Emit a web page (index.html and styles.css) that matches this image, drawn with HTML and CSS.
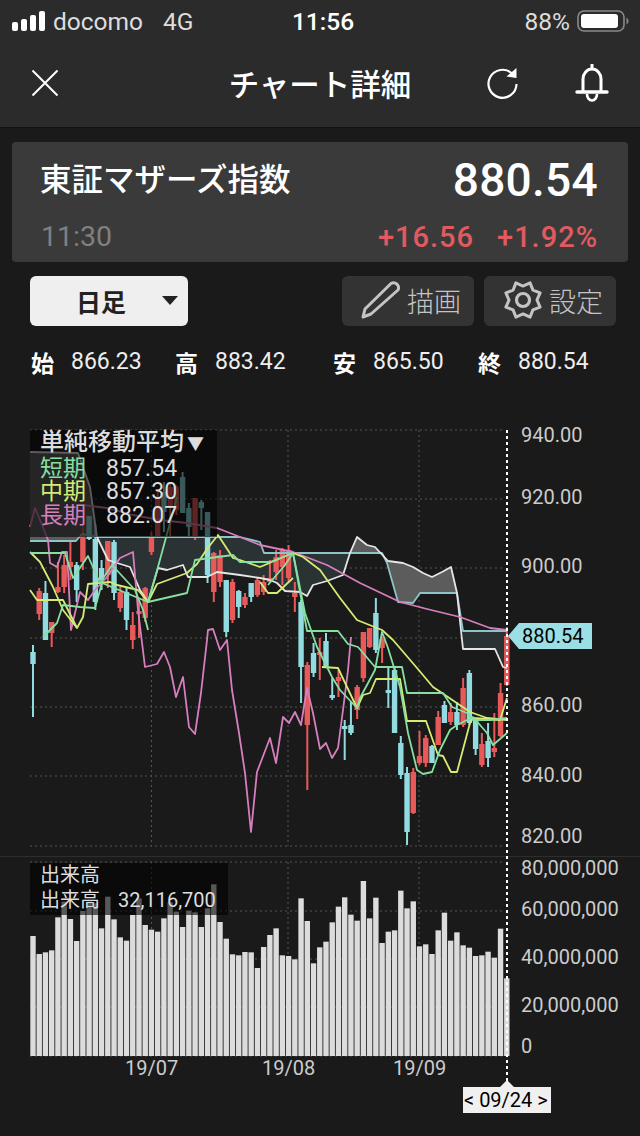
FILE: index.html
```html
<!DOCTYPE html>
<html lang="ja">
<head>
  <meta charset="UTF-8">
  <meta name="viewport" content="width=device-width, initial-scale=1.0">
  <title>チャート詳細</title>
  <link rel="stylesheet" href="styles.css">
</head>
<body>
  <div class="status">
    <div class="status-left">
      <svg class="signal" width="34" height="22" viewBox="0 0 34 22">
        <rect x="0" y="12" width="6" height="9" rx="2"/>
        <rect x="9" y="9" width="6" height="12" rx="2"/>
        <rect x="18" y="5" width="6" height="16" rx="2"/>
        <rect x="27" y="1" width="6" height="20" rx="2"/>
      </svg>
      <span>docomo</span>
      <span class="net">4G</span>
    </div>
    <div class="status-time">11:56</div>
    <div class="status-right">
      <span>88%</span>
      <svg width="52" height="24" viewBox="0 0 52 24">
        <rect x="1" y="2" width="46" height="20" rx="6" fill="none" stroke="#8a8a8a" stroke-width="1.6"/>
        <rect x="4" y="5" width="37" height="14" rx="3" fill="#fff"/>
        <path d="M49.5 8.5 a4 4 0 0 1 0 7z" fill="#8a8a8a"/>
      </svg>
    </div>
  </div>

  <header class="nav">
    <svg class="nav-close" width="28" height="28" viewBox="0 0 28 28">
      <path d="M1.5 1.5 L26.5 26.5 M26.5 1.5 L1.5 26.5" stroke="#fff" stroke-width="2" fill="none"/>
    </svg>
    <h1>チャート詳細</h1>
    <div class="nav-icons">
      <svg width="32" height="32" viewBox="487 67 32 32">
        <path d="M513 73.5 A14 14 0 1 0 517.5 84" stroke="#fff" stroke-width="2.2" fill="none"/>
        <path d="M517.5 68 L517.5 78 L507.5 76.5 Z" fill="#fff"/>
      </svg>
      <svg width="34" height="40" viewBox="576 64 34 40">
        <path d="M593 65 V71 M584 92 V80 A9 10 0 0 1 602 80 V92" stroke="#fff" stroke-width="3" fill="none"/>
        <path d="M578 93 H608" stroke="#fff" stroke-width="3.4" stroke-linecap="round"/>
        <path d="M588 95 a5 6.5 0 0 0 10 0" stroke="#fff" stroke-width="2.6" fill="none"/>
      </svg>
    </div>
  </header>

  <section class="quote">
    <div class="quote-row">
      <div class="quote-name">東証マザーズ指数</div>
      <div class="quote-price">880.54</div>
    </div>
    <div class="quote-row quote-sub">
      <div class="quote-time">11:30</div>
      <div class="quote-change"><span>+16.56</span><span>+1.92%</span></div>
    </div>
  </section>

  <div class="tools">
    <div class="select">
      <span>日足</span>
      <i class="caret"></i>
    </div>
    <div class="tool-btns">
      <div class="tool-btn">
        <svg width="40" height="40" viewBox="359 282 40 40">
          <path d="M361 319 L363 311 L389 285.5 A5 5 0 0 1 396 292 L369 316 Z" stroke="#c4c4c4" stroke-width="3" fill="none" stroke-linejoin="round"/>
        </svg>
        <span>描画</span>
      </div>
      <div class="tool-btn">
        <svg width="40" height="40" viewBox="-20 -20 40 40">
          <polygon transform="rotate(22.5)" points="18.5,0 12.9,5.4 13.1,13.1 5.4,12.9 0,18.5 -5.4,12.9 -13.1,13.1 -12.9,5.4 -18.5,0 -12.9,-5.4 -13.1,-13.1 -5.4,-12.9 0,-18.5 5.4,-12.9 13.1,-13.1 12.9,-5.4" stroke="#c4c4c4" stroke-width="3" fill="none" stroke-linejoin="round"/>
          <circle r="6.5" stroke="#c4c4c4" stroke-width="3.2" fill="none"/>
        </svg>
        <span>設定</span>
      </div>
    </div>
  </div>

  <div class="ohlc">
    <div><b>始</b><span>866.23</span></div>
    <div><b>高</b><span>883.42</span></div>
    <div><b>安</b><span>865.50</span></div>
    <div><b>終</b><span>880.54</span></div>
  </div>

  <section class="chart">
    <svg class="chart-svg" width="640" height="736" viewBox="0 400 640 736">
      <g id="grid"></g>
      <g id="cloud"></g>
      <g id="candles"></g>
      <g id="lines"></g>
      <g id="volume"></g>
      <path class="cursor" d="M507 430 V1082"/>
      <g class="axis">
        <text x="521" y="442">940.00</text>
        <text x="521" y="504">920.00</text>
        <text x="521" y="573">900.00</text>
        <text x="521" y="712">860.00</text>
        <text x="521" y="782">840.00</text>
        <text x="521" y="843">820.00</text>
        <text x="521" y="875">80,000,000</text>
        <text x="521" y="916">60,000,000</text>
        <text x="521" y="964">40,000,000</text>
        <text x="521" y="1012">20,000,000</text>
        <text x="521" y="1053">0</text>
        <text x="125" y="1075">19/07</text>
        <text x="262" y="1075">19/08</text>
        <text x="393" y="1075">19/09</text>
      </g>
      <polygon class="price-tag" points="508,636 519,623 592,623 592,649 519,649"/>
      <text class="tag-text" x="522" y="643">880.54</text>
      <polygon class="date-tag" points="500,1087 507,1080 514,1087 551,1087 551,1113 463,1113 463,1087"/>
      <text class="tag-text" x="464" y="1107">&lt; 09/24 &gt;</text>
    </svg>

    <div class="legend legend-ma">
      <div class="legend-title">単純移動平均<small>▼</small></div>
      <div class="legend-row"><span class="ma-short">短期</span><b>857.54</b></div>
      <div class="legend-row"><span class="ma-mid">中期</span><b>857.30</b></div>
      <div class="legend-row"><span class="ma-long">長期</span><b>882.07</b></div>
    </div>
    <div class="legend legend-vol">
      <div>出来高</div>
      <div class="legend-row"><span>出来高</span><b>32,116,700</b></div>
    </div>
  </section>

  <script src="chart.js"></script>
</body>
</html>
```

FILE: styles.css
```css
* {
  box-sizing: border-box;
}
body {
  margin: 0;
  width: 640px;
  height: 1136px;
  overflow: hidden;
  background: #1a1a1a;
  color: #fff;
  font-family: Roboto, "Noto Sans CJK JP", sans-serif;
}
.status {
  display: grid;
  grid-template-columns: 1fr auto 1fr;
  align-items: center;
  height: 42px;
  padding: 0 12px;
  background: #2b2b2b;
  font-size: 24.5px;
  color: #ddd;
}
.status-left, .status-right {
  display: flex;
  align-items: center;
  gap: 7px;
}
.status-left .net {
  margin-left: 13px;
}
.status-right {
  justify-content: flex-end;
  margin-right: -1px;
}
.status-time {
  color: #fff;
  font-weight: 500;
  margin-left: 6px;
}
.signal rect {
  fill: #fff;
}
.nav {
  display: grid;
  grid-template-columns: 1fr auto 1fr;
  align-items: center;
  height: 86px;
  padding: 0 31px 3px;
  background: #2b2b2b;
  border-bottom: 1px solid #111;
}
.nav h1 {
  margin: 0;
  font-size: 30.5px;
  font-weight: 500;
  font-family: "Noto Sans CJK JP", sans-serif;
}
.nav-icons {
  display: flex;
  justify-content: flex-end;
  align-items: center;
  gap: 57px;
}
.quote {
  margin: 14px 12px 0;
  height: 120px;
  padding: 7px 30px 0 28px;
  background: #3a3a3a;
  border-radius: 4px;
}
.quote-row {
  display: flex;
  justify-content: space-between;
  align-items: center;
}
.quote-name {
  font-family: "Noto Sans CJK JP", sans-serif;
  font-size: 31.5px;
  font-weight: 500;
  line-height: 46px;
  margin-top: -1px;
}
.quote-price {
  font-size: 46px;
  font-weight: 500;
  line-height: 52px;
  letter-spacing: 0.3px;
  margin-top: 5px;
}
.quote-sub {
  margin-top: 13px;
  padding-left: 1px;
  font-size: 28.5px;
  line-height: 36px;
}
.quote-time {
  color: #808080;
}
.quote-change {
  display: flex;
  gap: 23px;
  color: #e25a5f;
  font-size: 29px;
  font-weight: 500;
  letter-spacing: 1px;
}
.tools {
  display: flex;
  justify-content: space-between;
  height: 50px;
  margin-top: 14px;
  padding: 0 24px 0 30px;
}
.select {
  position: relative;
  width: 158px;
  background: #efefef;
  border-radius: 6px;
  color: #222;
  font-family: "Noto Sans CJK JP", sans-serif;
  font-size: 25px;
  font-weight: 700;
  line-height: 50px;
  padding-left: 46px;
}
.caret {
  position: absolute;
  left: 132px;
  top: 20px;
  border-left: 8px solid transparent;
  border-right: 8px solid transparent;
  border-top: 9px solid #222;
}
.tool-btns {
  display: flex;
  gap: 10px;
}
.tool-btn {
  display: flex;
  align-items: center;
  justify-content: flex-end;
  gap: 6px;
  width: 132px;
  padding: 0 13px 2px 0;
  background: #333;
  border-radius: 6px;
  color: #c4c4c4;
  font-family: "Noto Sans CJK JP", sans-serif;
  font-size: 27px;
  font-weight: 300;
}
.ohlc {
  display: grid;
  grid-template-columns: 144px 158px 145px 1fr;
  height: 26px;
  margin-top: 23px;
  padding-left: 31px;
  line-height: 26px;
  font-size: 23px;
}
.ohlc div {
  display: flex;
  gap: 17px;
}
.ohlc b {
  font-family: "Noto Sans CJK JP", sans-serif;
  font-weight: 700;
}
.ohlc span {
  color: #eee;
}
.chart {
  position: relative;
  height: 736px;
  margin-top: 25px;
}
.chart-svg {
  display: block;
}
.grid-line {
  stroke: #555;
  stroke-width: 1;
  stroke-dasharray: 2 3;
  fill: none;
}
.divider {
  stroke: #2d2d2d;
  stroke-width: 1;
}
.cursor {
  stroke: #fff;
  stroke-width: 2;
  stroke-dasharray: 3 3;
  fill: none;
}
.axis text {
  fill: #ccc;
  font-size: 20px;
}
.price-tag {
  fill: #9adfe4;
}
.date-tag {
  fill: #f0f0f0;
}
.tag-text {
  fill: #000;
  font-size: 20px;
}
.cloud-dark {
  fill: #2a3234;
}
.cloud-light {
  fill: #5c5c5c;
}
.ln {
  fill: none;
  stroke-width: 1.8;
  stroke-linejoin: round;
}
.ln-green {
  stroke: #86e0a0;
}
.ln-yellow {
  stroke: #d4ec72;
}
.ln-pink {
  stroke: #d77fbe;
}
.ln-white {
  stroke: #e6e6e6;
}
.ln-teal {
  stroke: #8cc4c8;
}
.up {
  fill: #e85a5a;
}
.down {
  fill: #92dbe0;
}
.vol-bar {
  fill: #dcdcdc;
}
.legend {
  position: absolute;
  left: 30px;
  background: rgba(0, 0, 0, 0.6);
  padding-left: 10px;
  color: #ddd;
  font-family: Roboto, "Noto Sans CJK JP", sans-serif;
}
.legend-ma {
  top: 30px;
  width: 187px;
  height: 107px;
  font-size: 23px;
  line-height: 23.5px;
}
.legend-title {
  font-size: 24px;
  font-weight: 500;
  margin-top: 1px;
}
.legend-title small {
  font-size: 17px;
  margin-left: 3px;
}
.legend-row {
  display: flex;
}
.legend-row b {
  font-weight: 400;
  margin-left: 20px;
}
.legend-ma .legend-row b {
  letter-spacing: 0.1px;
}
.ma-short {
  color: #86e0a0;
}
.ma-mid {
  color: #d4ec72;
}
.ma-long {
  color: #d77fbe;
}
.legend-vol {
  top: 463px;
  width: 198px;
  height: 52px;
  font-size: 20px;
  line-height: 25px;
}
.legend-vol .legend-row b {
  margin-left: 18px;
}
```

FILE: chart.js
```js
const SVG_NS = 'http://www.w3.org/2000/svg';

function add(parent, tag, attrs) {
  const el = document.createElementNS(SVG_NS, tag);
  Object.keys(attrs).forEach(k => el.setAttribute(k, attrs[k]));
  document.getElementById(parent).appendChild(el);
}

function barX(i) {
  return 33 + i * 6.234;
}

// grid
[430, 499, 568, 638, 707, 776, 846, 862, 911, 959, 1007, 1056].forEach(y => {
  add('grid', 'path', { class: 'grid-line', d: `M30 ${y} H505` });
});
[151.5, 288, 419].forEach(x => {
  add('grid', 'path', { class: 'grid-line', d: `M${x} 430 V846 M${x} 862 V1056` });
});
add('grid', 'path', { class: 'divider', d: 'M0 856.5 H640' });

// ichimoku
const teal = [[30,541],[76,541],[82,534],[97,537],[240,537],[260,542],[264,553],[350,553],[382,553],[387,563],[398,602],[413,603],[420,593],[457,593],[463,631],[507,631]];
const white = [[30,452],[78,453],[90,487],[97,537],[108,560],[117,563],[130,567],[140,590],[148,602],[158,568],[167,570],[183,565],[188,577],[207,577],[217,572],[240,575],[260,578],[270,580],[277,583],[285,591],[300,592],[307,596],[313,585],[327,581],[343,575],[350,553],[357,537],[367,545],[375,547],[388,561],[403,563],[413,567],[423,573],[432,577],[442,572],[451,567],[457,593],[463,649],[495,649],[503,667],[507,668]];

const toPts = a => a.map(p => p.join(',')).join(' ');

add('cloud', 'polygon', { class: 'cloud-light', points: toPts([[30,452],[78,453],[90,487],[97,537],[82,534],[76,541],[30,541]]) });
add('cloud', 'polygon', { class: 'cloud-dark', points: toPts([[97,537],[240,537],[260,542],[264,553],[350,553],[343,575],[327,581],[313,585],[307,596],[300,592],[285,591],[277,583],[260,578],[217,572],[207,577],[188,577],[183,565],[167,570],[158,568],[148,602],[140,590],[130,567],[117,563],[108,560]]) });
add('cloud', 'polygon', { class: 'cloud-light', points: toPts([[350,553],[357,537],[367,545],[375,547],[388,561],[403,563],[413,567],[423,573],[432,577],[442,572],[451,567],[457,593],[420,593],[413,603],[398,602],[387,563],[382,553]]) });
add('cloud', 'polygon', { class: 'cloud-dark', points: toPts([[463,631],[507,631],[507,668],[503,667],[495,649],[463,649]]) });

// candles: high, body top, body bottom, low, 1 = up
const candles = [
  [645,652,664,717,0],[588,591,614,620,1],[581,593,640,640,0],[622,622,633,647,1],
  [562,587,592,593,1],[555,565,587,593,1],[542,562,567,580,1],[562,565,590,602,0],
  [527,534,562,570,1],[516,516,539,540,0],[524,539,602,610,0],[560,568,580,590,0],
  [541,541,575,588,1],[540,542,593,600,0],[587,592,608,612,1],[588,592,620,630,0],
  [612,625,640,649,1],[600,611,613,638,1],[587,588,618,622,1],[532,538,552,555,1],
  [490,498,537,537,1],[482,492,512,532,0],[483,487,508,537,1],[485,487,510,515,1],
  [472,477,513,513,0],[503,508,527,538,0],[498,498,537,540,1],[500,502,508,530,0],
  [512,512,575,583,0],[552,553,592,602,1],[550,555,582,587,1],[580,580,632,637,0],
  [579,582,620,623,1],[590,591,607,618,0],[593,597,605,608,1],[583,583,597,602,0],
  [578,580,595,597,1],[575,582,592,595,1],[560,578,582,583,1],[550,557,572,580,1],
  [548,550,567,585,1],[545,550,578,582,1],[582,593,597,612,1],[600,602,667,703,0],
  [662,665,725,790,1],[643,653,673,677,0],[638,652,655,680,1],[633,641,667,667,0],
  [678,695,698,700,0],[670,677,681,697,1],[720,726,729,760,0],[702,725,733,735,0],
  [685,687,710,719,1],[632,632,678,682,1],[628,628,647,648,1],[598,613,650,653,0],
  [637,639,648,663,1],[667,690,692,708,0],[668,670,733,733,0],[736,743,775,779,0],
  [767,773,832,845,0],[768,772,813,814,1],[731,756,763,765,1],[735,738,763,767,1],
  [745,746,763,763,0],[711,717,745,745,1],[701,705,723,723,0],[703,712,722,725,1],
  [702,712,725,730,0],[678,688,725,727,1],[670,673,723,725,0],[718,718,749,755,0],
  [733,744,765,767,1],[723,741,758,767,0],[713,748,752,757,1],[683,693,736,737,1],
  [627,636,685,686,1]
];
candles.forEach((c, i) => {
  const x = barX(i);
  const cls = c[4] ? 'up' : 'down';
  add('candles', 'rect', { class: cls, x: x - 1, y: c[0], width: 2, height: c[3] - c[0] });
  add('candles', 'rect', { class: cls, x: x - 2.7, y: c[1], width: 5.4, height: Math.max(c[2] - c[1], 3) });
});

// moving averages
const series = {
  'ln-teal': [teal],
  'ln-white': [white],
  'ln-pink': [
    [[30,527],[35,508],[40,520],[48,540],[50,563],[57,567],[62,552],[67,552],[71,630],[80,592],[88,600],[95,590],[107,577],[120,558],[133,552],[138,610],[145,667],[157,664],[164,652],[170,667],[176,697],[183,677],[189,727],[195,734],[201,693],[207,640],[208,630],[213,629],[220,650],[227,640],[232,690],[239,733],[245,773],[251,832],[257,772],[270,738],[276,763],[283,717],[289,723],[295,712],[301,725],[307,688],[313,713],[320,749],[326,743],[332,758],[338,748],[343,710],[348,670],[351,637]],
    [[83,505],[107,508],[133,515],[160,520],[187,523],[217,528],[240,537],[260,545],[293,552],[327,565],[360,583],[400,602],[427,609],[460,617],[490,628],[507,630]]
  ],
  'ln-yellow': [
    [[30,552],[40,562],[53,587],[63,610],[77,628],[83,617],[88,584],[110,582],[117,585],[138,590],[148,602],[157,584],[187,573],[197,564],[207,549],[218,535],[233,558],[240,560],[260,567],[293,553],[303,557],[320,570],[340,598],[357,620],[382,630],[393,640],[417,668],[433,687],[442,693],[470,712],[487,718],[507,720]],
    [[30,590],[37,600],[63,600],[77,628]],
    [[260,582],[268,593],[277,593],[293,578]],
    [[322,667],[338,668],[357,708],[363,695],[370,693],[376,679],[400,679],[407,721],[426,721],[438,755],[443,756],[451,772],[457,772],[470,723],[473,718],[500,720],[507,698]]
  ],
  'ln-green': [
    [[30,553],[65,553],[73,578],[88,556],[100,583],[112,565],[135,590],[143,610],[148,630]],
    [[43,637],[57,623],[63,605],[80,607],[95,608],[102,583],[148,602],[187,593],[195,560],[233,555],[240,562],[270,562],[293,553]],
    [[148,602],[158,567],[177,497]],
    [[293,553],[307,631],[338,631],[348,644],[358,647],[375,667],[402,667],[407,693],[443,693],[452,707],[467,713],[473,720],[490,720],[507,718]],
    [[293,553],[305,613],[317,647],[332,677],[340,690],[357,708],[360,698],[375,670],[382,632],[388,648],[400,687],[408,733],[417,770],[423,774],[432,772],[440,750],[450,730],[457,725],[473,717],[487,733],[493,745],[507,733]],
    [[268,585],[285,565],[293,553]]
  ]
};
Object.keys(series).forEach(cls => {
  series[cls].forEach(pts => {
    add('lines', 'polyline', { class: 'ln ' + cls, points: toPts(pts) });
  });
});

// volume, values are the bar tops
const volTops = [
  243,297,292,286,187,140,192,258,168,140,145,220,125,193,247,257,180,130,210,224,
  230,190,142,170,216,167,172,216,160,88,201,251,298,301,291,292,339,276,240,220,
  301,303,313,130,198,325,277,260,202,155,127,179,197,78,190,128,264,230,226,107,
  160,139,274,268,297,226,173,257,232,271,278,303,301,290,308,221,370
];
volTops.forEach((t, i) => {
  const top = 855 + t / 3;
  add('volume', 'rect', { class: 'vol-bar', x: barX(i) - 2.7, y: top, width: 5.4, height: 1056 - top });
});
```
